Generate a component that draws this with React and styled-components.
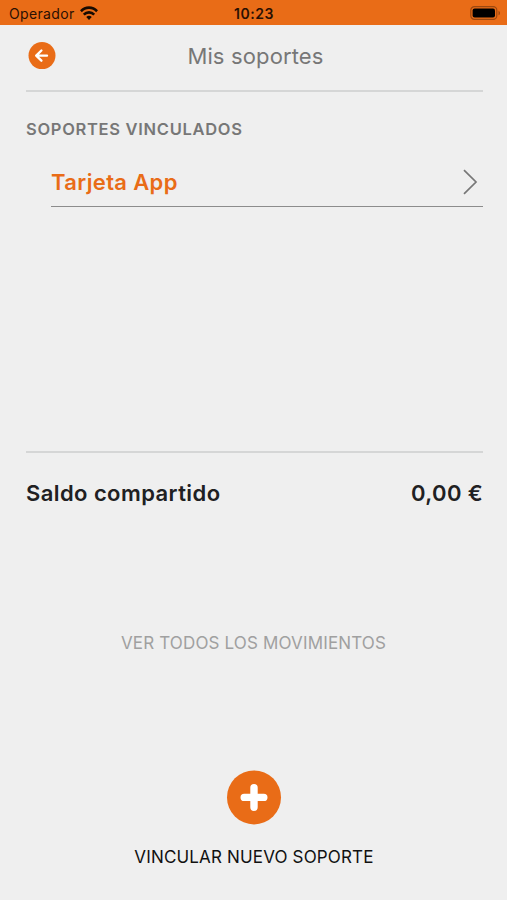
import React from 'react';
import styled, { createGlobalStyle } from 'styled-components';

const GlobalStyle = createGlobalStyle`
    * { box-sizing: border-box; }
    body {
        margin: 0;
        background: #efefef;
        font-family: Inter, "Liberation Sans", sans-serif;
    }
`;

const Screen = styled.main`
    display: flex;
    flex-direction: column;
    height: 900px;
    background: #efefef;
    color: #202022;
`;

const StatusBar = styled.div`
    display: grid;
    grid-template-columns: 1fr auto 1fr;
    align-items: center;
    height: 25px;
    padding: 2px 6px 0 9px;
    background: #e96c17;
    color: #2a1003;
    font-size: 14px;
    line-height: 20px;
`;

const Carrier = styled.div`
    display: flex;
    align-items: center;
    gap: 5px;
    letter-spacing: 0.35px;
`;

const WifiIcon = styled.svg`
    margin-bottom: 2px;
`;

const Clock = styled.div`
    margin-right: 2px;
    font-size: 14px;
    font-weight: 600;
    letter-spacing: 0.6px;
`;

const Battery = styled.svg`
    justify-self: end;
    margin-bottom: 1px;
`;

const Header = styled.header`
    display: grid;
    grid-template-columns: 28px 1fr 28px;
    align-items: center;
    height: 67px;
    margin: 0 24px 0 26px;
    padding: 0 0 4px 2px;
    border-bottom: 2px solid #d5d6d6;
`;

const BackButton = styled.button`
    display: flex;
    padding: 0;
    border: 0;
    background: none;
`;

const Title = styled.h1`
    margin: 0;
    color: #777;
    font-size: 22px;
    font-weight: 400;
    letter-spacing: 0.14px;
    line-height: 28px;
    text-align: center;
`;

const Linked = styled.section`
    height: 359px;
    margin: 0 24px 0 26px;
    padding-top: 27px;
`;

const SectionTitle = styled.h2`
    margin: 0;
    color: #777;
    font-size: 16.5px;
    font-weight: 600;
    letter-spacing: 0.7px;
    line-height: 20px;
`;

const CardRow = styled.a`
    display: flex;
    align-items: center;
    justify-content: space-between;
    height: 49px;
    margin: 19px 0 0 25px;
    padding-right: 5px;
    border-bottom: 1px solid #8c8c8c;
    color: #e96c17;
    font-size: 22px;
    font-weight: 600;
    letter-spacing: 0.35px;
`;

const Balance = styled.section`
    display: flex;
    justify-content: space-between;
    height: 171px;
    margin: 0 24px 0 26px;
    padding-top: 26px;
    border-top: 2px solid #d5d6d6;
    font-size: 22px;
    font-weight: 600;
    letter-spacing: 0.42px;
    line-height: 28px;
`;

const Amount = styled.span`
    letter-spacing: 0.35px;
`;

const MovementsLink = styled.a`
    height: 147px;
    padding-top: 11px;
    color: #a0a0a0;
    font-size: 17px;
    letter-spacing: 0.15px;
    line-height: 20px;
    text-align: center;
`;

const LinkButton = styled.button`
    display: flex;
    flex-direction: column;
    align-items: center;
    gap: 22px;
    padding: 0;
    border: 0;
    background: none;
    color: #111;
    font-family: inherit;
    font-size: 17px;
    letter-spacing: 0.16px;
    line-height: 20px;
`;

const LinkLabel = styled.span`
    padding-left: 1px;
`;

const App = () => {

    return (
        <Screen>
            <GlobalStyle />
            <StatusBar>
                <Carrier>
                    <span>Operador</span>
                    <WifiIcon width="18" height="14" viewBox="0 0 19 14" preserveAspectRatio="none" fill="none" stroke="#170b02" strokeWidth="2.7">
                        <path d="M1 5.2a12 12 0 0 1 17 0M4 8.6a7.8 7.8 0 0 1 11 0" />
                        <path d="M6.6 11.1a4.1 4.1 0 0 1 5.8 0L9.5 14z" fill="#170b02" stroke="none" />
                    </WifiIcon>
                </Carrier>
                <Clock>10:23</Clock>
                <Battery width="31" height="14" viewBox="0 0 31 14">
                    <rect x=".8" y=".7" width="26" height="12.6" rx="3.6" fill="none" stroke="#9c4810" strokeWidth="1.2" />
                    <rect x="2.6" y="2.5" width="22.4" height="9" rx="2" fill="#000" />
                    <path d="M28.5 4.7c2 .8 2 3.8 0 4.6z" fill="#9c4810" />
                </Battery>
            </StatusBar>
            <Header>
                <BackButton aria-label="Volver">
                    <svg width="28" height="28" viewBox="0 0 28 28">
                        <circle cx="14" cy="13.6" r="13.5" fill="#e96c17" />
                        <path d="M19 13.6H8.6m4.8-5.1-5.2 5.1 5.2 5.1" fill="none" stroke="#fff" strokeWidth="2.4" strokeLinecap="round" strokeLinejoin="round" />
                    </svg>
                </BackButton>
                <Title>Mis soportes</Title>
            </Header>
            <Linked>
                <SectionTitle>SOPORTES VINCULADOS</SectionTitle>
                <CardRow>
                    <span>Tarjeta App</span>
                    <svg width="15" height="26" viewBox="0 0 15 26" fill="none" stroke="#777" strokeWidth="1.7">
                        <path d="m1 1.2 12 11.8L1 24.8" />
                    </svg>
                </CardRow>
            </Linked>
            <Balance>
                <span>Saldo compartido</span>
                <Amount>0,00 €</Amount>
            </Balance>
            <MovementsLink>VER TODOS LOS MOVIMIENTOS</MovementsLink>
            <LinkButton>
                <svg width="56" height="56" viewBox="0 0 56 56">
                    <circle cx="28" cy="28.4" r="27" fill="#e96c17" />
                    <path d="M28 18.6v19.6M18.2 28.4h19.6" stroke="#fff" strokeWidth="7.4" strokeLinecap="round" />
                </svg>
                <LinkLabel>VINCULAR NUEVO SOPORTE</LinkLabel>
            </LinkButton>
        </Screen>
    );
};

export default App;
